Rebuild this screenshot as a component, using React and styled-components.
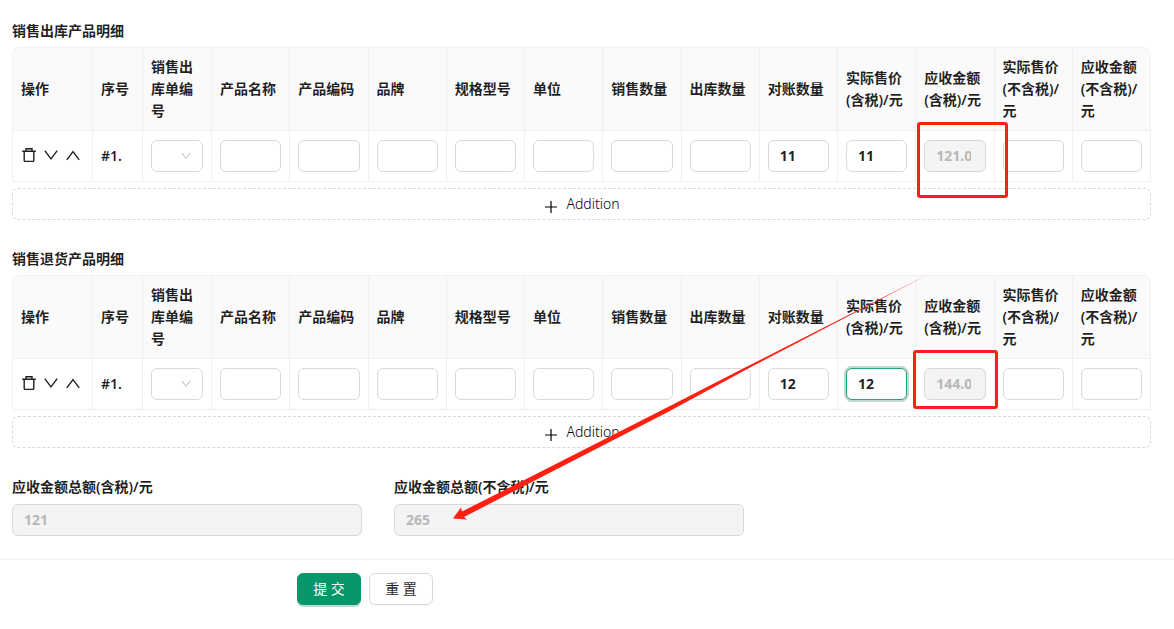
import React from "react";
import styled, { createGlobalStyle, css } from "styled-components";
import { AiOutlineDown } from "react-icons/ai";

const GlobalStyle = createGlobalStyle`
  *, *::before, *::after { box-sizing: border-box; }
  body {
    margin: 0;
    background: #fff;
    color: rgba(0, 0, 0, 0.88);
    font: 14px/22px "Noto Sans", "Noto Sans CJK SC", sans-serif;
  }
  button, input, select { font: inherit; color: inherit; }
`;

const Page = styled.form`
  padding-top: 20px;
`;

const Content = styled.div`
  position: relative;
  display: flex;
  flex-direction: column;
  gap: 28px;
  padding: 0 23px 23px 12px;
`;

const Section = styled.section`
  display: flex;
  flex-direction: column;
`;

const Title = styled.h2`
  margin: 0 0 5px;
  font-size: 14px;
  line-height: 22px;
  font-weight: 600;
`;

const Table = styled.table`
  width: 100%;
  table-layout: fixed;
  border-collapse: separate;
  border-spacing: 0;
  border: solid #f0f0f0;
  border-width: 1px 0 0 1px;
  border-radius: 8px 8px 0 0;
`;

const Col = styled.col`
  width: ${(p) => p.$width || "auto"};
`;

const HeadCell = styled.th`
  height: 83px;
  padding: 8px;
  text-align: left;
  vertical-align: middle;
  font-weight: 600;
  background: #fafafa;
  border: solid #f0f0f0;
  border-width: 0 1px 1px 0;
  &:first-child { border-top-left-radius: 8px; }
  &:last-child { border-top-right-radius: 8px; }
`;

const Cell = styled.td`
  position: relative;
  height: 51px;
  padding: 0 8px;
  vertical-align: middle;
  font-weight: 600;
  border: solid #f0f0f0;
  border-width: 0 1px 1px 0;
`;

const Actions = styled.div`
  display: flex;
  gap: 6px;
  padding-bottom: 2px;
`;

const IconButton = styled.button`
  display: flex;
  padding: 0;
  border: 0;
  background: none;
`;

const Glyph = styled.svg.attrs({ width: 16, height: 16, viewBox: "0 0 16 16", "aria-hidden": true })`
  fill: none;
  stroke: currentColor;
  stroke-width: ${(p) => p.$stroke || 1.4};
`;

const control = css`
  display: block;
  width: 100%;
  height: 32px;
  padding: 3px 14px 5px 11px;
  border: 1px solid #d9d9d9;
  border-radius: 6px;
  background: #fff;
  font-weight: 700;
`;

const Input = styled.input`
  ${control}
  outline: none;
  &:disabled {
    background: #f4f4f4;
    color: #b8b8b8;
  }
  ${(p) =>
    p.$active &&
    css`
      border-color: #27a478;
      box-shadow: 0 0 0 2px rgba(5, 105, 70, 0.25);
    `}
`;

const SelectBox = styled.div`
  position: relative;
`;

const Select = styled.select`
  ${control}
  appearance: none;
`;

const SelectArrow = styled(AiOutlineDown)`
  position: absolute;
  top: 10px;
  right: 11px;
  font-size: 12px;
  color: rgba(0, 0, 0, 0.25);
  pointer-events: none;
`;

const AddButton = styled.button`
  display: flex;
  align-items: center;
  justify-content: center;
  gap: 7px;
  height: 32px;
  margin-top: 6px;
  border: 1px dashed #d9d9d9;
  border-radius: 6px;
  background: #fff;
  color: #000;
  font-weight: 300;
  svg { margin-top: 5px; }
`;

const Totals = styled.div`
  display: grid;
  grid-template-columns: repeat(3, 1fr);
  gap: 32px;
  padding-right: 25px;
`;

const Label = styled.label`
  display: block;
  margin-bottom: 6px;
  font-weight: 600;
`;

const Footer = styled.footer`
  display: flex;
  gap: 8px;
  padding: 13px 24px 24px 297px;
  border-top: 1px solid #f0f0f0;
`;

const Button = styled.button`
  width: 64px;
  height: 32px;
  padding: 0;
  border-radius: 6px;
  border: 1px solid ${(p) => (p.$primary ? "#059669" : "#d9d9d9")};
  background: ${(p) => (p.$primary ? "#059669" : "#fff")};
  color: ${(p) => (p.$primary ? "#fff" : "inherit")};
  box-shadow: 0 2px 0 ${(p) => (p.$primary ? "rgba(5, 105, 70, 0.25)" : "rgba(0, 0, 0, 0.02)")};
`;

const Highlight = styled.span`
  position: absolute;
  z-index: 1;
  top: -9px;
  left: ${(p) => (p.$large ? "1px" : "-3px")};
  width: ${(p) => (p.$large ? "91px" : "85px")};
  height: ${(p) => (p.$large ? "76px" : "59px")};
  border: 3px solid #ff2012;
  border-radius: 3px;
  pointer-events: none;
`;

const Arrow = styled.svg`
  position: absolute;
  z-index: 2;
  left: 452px;
  bottom: 39px;
  pointer-events: none;
`;

const COLUMNS = [
  { title: "操作", width: "80px" },
  { title: "序号", width: "50px" },
  { title: "销售出库单编号", width: "69px" },
  { title: "产品名称" },
  { title: "产品编码" },
  { title: "品牌" },
  { title: "规格型号" },
  { title: "单位" },
  { title: "销售数量" },
  { title: "出库数量" },
  { title: "对账数量" },
  { title: "实际售价(含税)/元" },
  { title: "应收金额(含税)/元" },
  { title: "实际售价(不含税)/元" },
  { title: "应收金额(不含税)/元" },
];

function TrashIcon() {
  return (
    <Glyph>
      <path d="M1.2 4.2H14.8M5 4V1.8H11V4M3.2 4.2V13.6Q3.2 14.4 4 14.4H12Q12.8 14.4 12.8 13.6V4.2" />
    </Glyph>
  );
}

function DetailTable({ title, quantity, price, amount, focused, largeHighlight }) {
  const values = { 对账数量: quantity, "实际售价(含税)/元": price, "应收金额(含税)/元": amount };
  return (
    <Section>
      <Title>{title}</Title>
      <Table>
        <colgroup>
          {COLUMNS.map((c) => (
            <Col key={c.title} $width={c.width} />
          ))}
        </colgroup>
        <thead>
          <tr>
            {COLUMNS.map((c) => (
              <HeadCell key={c.title} scope="col">{c.title}</HeadCell>
            ))}
          </tr>
        </thead>
        <tbody>
          <tr>
            <Cell>
              <Actions>
                <IconButton type="button" aria-label="删除"><TrashIcon /></IconButton>
                <IconButton type="button" aria-label="下移">
                  <Glyph><path d="M1.8 3.6L8 11.8L14.2 3.6" /></Glyph>
                </IconButton>
                <IconButton type="button" aria-label="上移">
                  <Glyph><path d="M1.8 12.8L8 4.6L14.2 12.8" /></Glyph>
                </IconButton>
              </Actions>
            </Cell>
            <Cell>#1.</Cell>
            <Cell>
              <SelectBox>
                <Select aria-label="销售出库单编号" />
                <SelectArrow />
              </SelectBox>
            </Cell>
            {COLUMNS.slice(3).map((c) => {
              const isAmount = c.title === "应收金额(含税)/元";
              return (
                <Cell key={c.title}>
                  <Input
                    aria-label={c.title}
                    defaultValue={values[c.title]}
                    disabled={isAmount}
                    $active={focused === c.title}
                  />
                  {isAmount && <Highlight $large={largeHighlight} />}
                </Cell>
              );
            })}
          </tr>
        </tbody>
      </Table>
      <AddButton type="button">
        <Glyph $stroke={1.2}><path d="M8 2V14M2 8H14" /></Glyph>
        Addition
      </AddButton>
    </Section>
  );
}

export default function App() {
  return (
    <>
      <GlobalStyle />
      <Page onSubmit={(e) => e.preventDefault()}>
        <Content>
          <DetailTable title="销售出库产品明细" quantity="11" price="11" amount="121.00" largeHighlight />
          <DetailTable
            title="销售退货产品明细"
            quantity="12"
            price="12"
            amount="144.00"
            focused="实际售价(含税)/元"
          />
          <Totals>
            <div>
              <Label htmlFor="total-tax">应收金额总额(含税)/元</Label>
              <Input id="total-tax" defaultValue="121" disabled />
            </div>
            <div>
              <Label htmlFor="total-net">应收金额总额(不含税)/元</Label>
              <Input id="total-net" defaultValue="265" disabled />
            </div>
          </Totals>
          <Arrow width="478" height="246" viewBox="0 0 478 246" aria-hidden="true">
            <path d="M1 244.500L9 233.500L10 237.500L213 134.500L298 91L477 0L299 93L215 138.500L12 243L15 245.500Z" fill="#ff2012" />
          </Arrow>
        </Content>
        <Footer>
          <Button type="submit" $primary>提 交</Button>
          <Button type="reset">重 置</Button>
        </Footer>
      </Page>
    </>
  );
}
